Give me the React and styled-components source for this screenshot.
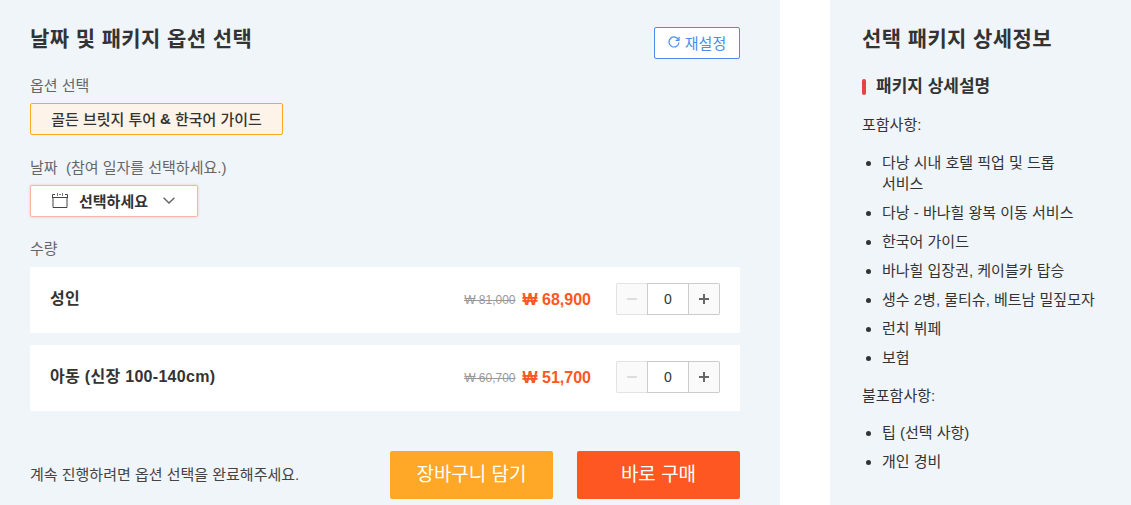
import React from 'react'
import styled, { createGlobalStyle } from 'styled-components'

const GlobalStyle = createGlobalStyle`
  html, body {
    margin: 0;
    padding: 0;
    background: #fff;
  }
  body {
    font-family: "Liberation Sans", "Noto Sans CJK KR", sans-serif;
    color: #333;
  }
  * { box-sizing: border-box; }
`

const Page = styled.div`
  width: 1131px;
  height: 505px;
  overflow: hidden;
  display: flex;
  justify-content: space-between;
`

const LeftPanel = styled.section`
  width: 780px;
  height: 505px;
  background: #f0f5fa;
  padding: 27px 40px 0 30px;
`

const RightPanel = styled.aside`
  width: 301px;
  height: 505px;
  background: #f0f5fa;
  padding: 27px 32px 0;
`

const HeaderRow = styled.div`
  display: flex;
  justify-content: space-between;
  align-items: flex-start;
  height: 32px;
`

const Title = styled.h2`
  margin: 0;
  font-size: 21px;
  font-weight: 700;
  letter-spacing: 0.4px;
  line-height: 24px;
  color: #333;
`

const ResetButton = styled.button`
  width: 86px;
  height: 32px;
  display: flex;
  align-items: center;
  justify-content: center;
  gap: 5px;
  padding: 0 0 2px;
  background: #fff;
  border: 1px solid #4a8cf0;
  border-radius: 2px;
  color: #4a8cf0;
  font: inherit;
  font-size: 15px;
`

const Label = styled.div`
  font-size: 15px;
  line-height: 20px;
  color: #666;
  margin-top: ${(props) => props.top}px;
`

const OptionChip = styled.div`
  width: 253px;
  height: 32px;
  margin-top: 7px;
  padding-bottom: 2px;
  display: flex;
  align-items: center;
  justify-content: center;
  gap: 4px;
  background: #fdf3e8;
  border: 1px solid #ffa726;
  border-radius: 2px;
  font-size: 15px;
  color: #333;
  font-weight: 500;
`

const Amp = styled.b`
  font-weight: 700;
`

const DateSelect = styled.div`
  width: 168px;
  height: 32px;
  margin-top: 7px;
  padding: 0 0 2px 21px;
  display: flex;
  align-items: center;
  background: #fff;
  border: 1px solid #f7b5a8;
  border-radius: 2px;
  box-shadow: 0 0 3px rgba(255, 87, 34, 0.3);
  font-size: 15px;
  font-weight: 700;
  color: #333;
`

const DateText = styled.span`
  margin: 0 15px 0 11px;
`

const Rows = styled.div`
  margin-top: 8px;
  display: flex;
  flex-direction: column;
  gap: 12px;
`

const TicketRow = styled.div`
  height: 66px;
  background: #fff;
  padding: 0 20px;
  display: flex;
  align-items: center;
`

const TicketName = styled.div`
  flex: 1;
  font-size: 16px;
  letter-spacing: 0.3px;
  font-weight: 700;
  color: #333;
  margin-top: -6px;
`

const OldPrice = styled.span`
  font-size: 12px;
  color: #999;
  text-decoration: line-through;
`

const NewPrice = styled.span`
  margin-left: 7px;
  font-size: 16px;
  font-weight: 700;
  color: #ff5722;
`

const Counter = styled.div`
  margin-left: 25px;
  display: flex;
  height: 32px;
  width: 104px;
  margin-top: -2px;
`

const CounterButton = styled.button`
  flex: 1;
  padding: 0;
  display: flex;
  align-items: center;
  justify-content: center;
  background: #fafafa;
  border: 1px solid ${(props) => (props.disabled ? '#e3e3e3' : '#ccc')};
  border-radius: ${(props) => (props.disabled ? '2px 0 0 2px' : '0 2px 2px 0')};
  border-right-width: ${(props) => (props.disabled ? 0 : '1px')};
  border-left-width: ${(props) => (props.disabled ? '1px' : 0)};
  color: ${(props) => (props.disabled ? '#ddd' : '#666')};
`

const CounterValue = styled.div`
  width: 42px;
  flex: none;
  display: flex;
  align-items: center;
  justify-content: center;
  background: #fff;
  border: 1px solid #ccc;
  font-size: 14px;
  color: #333;
`

const Footer = styled.div`
  margin-top: 40px;
  display: flex;
  align-items: center;
  height: 48px;
`

const FooterText = styled.div`
  flex: 1;
  font-size: 15px;
  color: #444;
  padding-bottom: 4px;
`

const BuyButton = styled.button`
  width: 163px;
  height: 48px;
  margin-left: ${(props) => props.gap || 0}px;
  padding: 0 0 5px;
  border: none;
  border-radius: 2px;
  background: ${(props) => props.color};
  color: #fff;
  font: inherit;
  font-size: 19px;
`

const SubTitle = styled.h3`
  margin: 25px 0 0;
  position: relative;
  font-size: 17px;
  font-weight: 700;
  line-height: 22px;
  color: #333;
  padding-left: 14px;
  &::before {
    content: '';
    position: absolute;
    left: 0;
    top: 3px;
    width: 4px;
    height: 16px;
    border-radius: 2px;
    background: #e84343;
  }
`

const ListLabel = styled.p`
  margin: ${(props) => props.top}px 0 0;
  font-size: 15px;
  line-height: 21px;
  color: #333;
`

const List = styled.ul`
  margin: ${(props) => props.top}px 0 0;
  padding: 0 0 0 20px;
  width: 235px;
  list-style: disc;
`

const Item = styled.li`
  font-size: 15px;
  line-height: 21px;
  color: #333;
  margin-bottom: 8px;
  word-break: keep-all;
`

const CalendarIcon = () => (
  <svg width="16" height="15" viewBox="0 0 16 15" fill="none" stroke="#444" strokeWidth="1">
    <path d="M.5 5V1.5H3M13 1.5h2.5V5M.5 4.5h15M1 4.5v10h14v-10M1 14.5h14" />
    <path d="M5.5 0v3M10.5 0v3M7 1.5h2" stroke="#777" />
  </svg>
)

const ChevronIcon = () => (
  <svg width="12" height="7" viewBox="0 0 12 7" fill="none" stroke="#666" strokeWidth="1.5">
    <path d="M.6.8 6 6 11.4.8" />
  </svg>
)

const ResetIcon = () => (
  <svg width="12" height="12" viewBox="0 0 12 12" fill="none" stroke="#4a8cf0" strokeWidth="1.2">
    <path d="M10.7 4.2A5 5 0 1 0 11 6.5" />
    <path d="M11 .8v3.6H7.6" />
  </svg>
)

const MinusIcon = () => (
  <svg width="10" height="10" viewBox="0 0 10 10" stroke="currentColor" strokeWidth="2">
    <path d="M0 5h10" />
  </svg>
)

const PlusIcon = () => (
  <svg width="10" height="10" viewBox="0 0 10 10" stroke="currentColor" strokeWidth="2">
    <path d="M0 5h10M5 0v10" />
  </svg>
)

const tickets = [
  { name: '성인', oldPrice: '₩ 81,000', price: '₩ 68,900' },
  { name: '아동 (신장 100-140cm)', oldPrice: '₩ 60,700', price: '₩ 51,700' },
]

const included = [
  '다낭 시내 호텔 픽업 및 드롭 서비스',
  '다낭 - 바나힐 왕복 이동 서비스',
  '한국어 가이드',
  '바나힐 입장권, 케이블카 탑승',
  '생수 2병, 물티슈, 베트남 밀짚모자',
  '런치 뷔페',
  '보험',
]

const excluded = ['팁 (선택 사항)', '개인 경비']

export default function App() {
  return (
    <>
      <GlobalStyle />
      <Page>
        <LeftPanel>
          <HeaderRow>
            <Title>날짜 및 패키지 옵션 선택</Title>
            <ResetButton>
              <ResetIcon />
              재설정
            </ResetButton>
          </HeaderRow>
          <Label top={17}>옵션 선택</Label>
          <OptionChip>
            <span>골든 브릿지 투어</span>
            <Amp>&amp;</Amp>
            <span>한국어 가이드</span>
          </OptionChip>
          <Label top={23}>날짜&nbsp; (참여 일자를 선택하세요.)</Label>
          <DateSelect>
            <CalendarIcon />
            <DateText>선택하세요</DateText>
            <ChevronIcon />
          </DateSelect>
          <Label top={22}>수량</Label>
          <Rows>
            {tickets.map((t) => (
              <TicketRow key={t.name}>
                <TicketName>{t.name}</TicketName>
                <OldPrice>{t.oldPrice}</OldPrice>
                <NewPrice>{t.price}</NewPrice>
                <Counter>
                  <CounterButton disabled>
                    <MinusIcon />
                  </CounterButton>
                  <CounterValue>0</CounterValue>
                  <CounterButton>
                    <PlusIcon />
                  </CounterButton>
                </Counter>
              </TicketRow>
            ))}
          </Rows>
          <Footer>
            <FooterText>계속 진행하려면 옵션 선택을 완료해주세요.</FooterText>
            <BuyButton color="#ffa726">장바구니 담기</BuyButton>
            <BuyButton color="#ff5722" gap={24}>바로 구매</BuyButton>
          </Footer>
        </LeftPanel>
        <RightPanel>
          <Title>선택 패키지 상세정보</Title>
          <SubTitle>패키지 상세설명</SubTitle>
          <ListLabel top={16}>포함사항:</ListLabel>
          <List top={17}>
            {included.map((item) => (
              <Item key={item}>{item}</Item>
            ))}
          </List>
          <ListLabel top={17}>불포함사항:</ListLabel>
          <List top={16}>
            {excluded.map((item) => (
              <Item key={item}>{item}</Item>
            ))}
          </List>
        </RightPanel>
      </Page>
    </>
  )
}
